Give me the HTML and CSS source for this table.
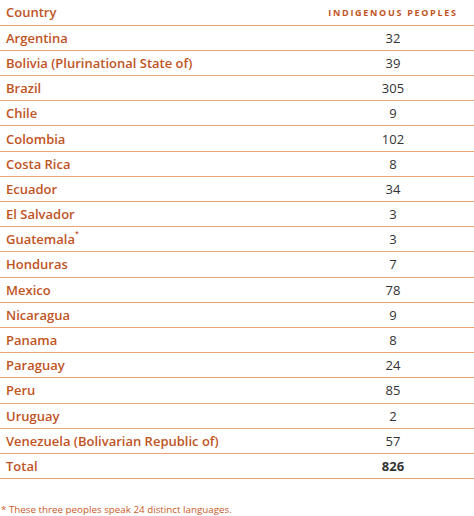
FILE: index.html
```html
<!DOCTYPE html>
<html>
<head>
<meta charset="utf-8">
<link rel="stylesheet" href="styles.css">
</head>
<body>
<div class="page">
  <table class="tbl">
    <thead>
      <tr><th class="c-name">Country</th><th class="c-num">INDIGENOUS PEOPLES</th></tr>
    </thead>
    <tbody>
      <tr><td class="c-name">Argentina</td><td class="c-num">32</td></tr>
      <tr><td class="c-name">Bolivia (Plurinational State of)</td><td class="c-num">39</td></tr>
      <tr><td class="c-name">Brazil</td><td class="c-num">305</td></tr>
      <tr><td class="c-name">Chile</td><td class="c-num">9</td></tr>
      <tr><td class="c-name">Colombia</td><td class="c-num">102</td></tr>
      <tr><td class="c-name">Costa Rica</td><td class="c-num">8</td></tr>
      <tr><td class="c-name">Ecuador</td><td class="c-num">34</td></tr>
      <tr><td class="c-name">El Salvador</td><td class="c-num">3</td></tr>
      <tr><td class="c-name">Guatemala<sup>*</sup></td><td class="c-num">3</td></tr>
      <tr><td class="c-name">Honduras</td><td class="c-num">7</td></tr>
      <tr><td class="c-name">Mexico</td><td class="c-num">78</td></tr>
      <tr><td class="c-name">Nicaragua</td><td class="c-num">9</td></tr>
      <tr><td class="c-name">Panama</td><td class="c-num">8</td></tr>
      <tr><td class="c-name">Paraguay</td><td class="c-num">24</td></tr>
      <tr><td class="c-name">Peru</td><td class="c-num">85</td></tr>
      <tr><td class="c-name">Uruguay</td><td class="c-num">2</td></tr>
      <tr><td class="c-name">Venezuela (Bolivarian Republic of)</td><td class="c-num">57</td></tr>
      <tr class="total"><td class="c-name">Total</td><td class="c-num">826</td></tr>
    </tbody>
  </table>
  <p class="note">* These three peoples speak 24 distinct languages.</p>
</div>
</body>
</html>
```
FILE: styles.css
```css
html, body { margin: 0; padding: 0; background: #fff; }
.page { width: 474px; font-family: "Open Sans", "Liberation Sans", sans-serif; }
.tbl { width: 474px; border-collapse: collapse; }
.tbl th, .tbl td { height: 25.2px; padding: 0 0 0 6px; border-bottom: 1.5px solid #eba47a; box-sizing: border-box; }
.c-name { text-align: left; color: #c0541f; font-weight: 600; font-size: 13px; }
.c-num { text-align: center; width: 160px; color: #333; font-size: 13px; padding: 0 2px 0 0 !important; }
th.c-num { color: #c0541f; font-size: 9px; font-weight: 700; letter-spacing: 1.7px; }
th.c-name { font-size: 13px; }
.total .c-num { font-weight: 700; }
sup { font-size: 7px; vertical-align: top; position: relative; top: -1px; }
.note { margin: 24px 0 0 0; padding-left: 1px; font-size: 9.8px; color: #c8592a; }
```
